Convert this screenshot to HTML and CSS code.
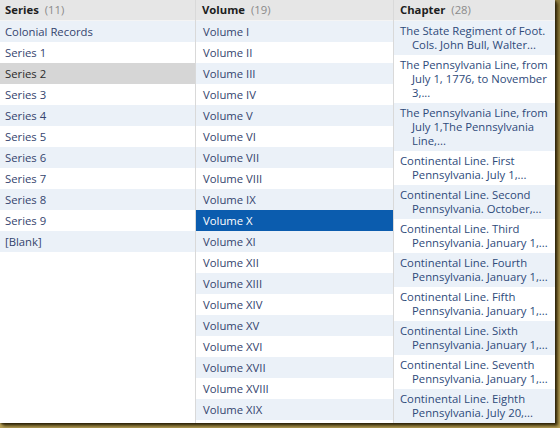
FILE: index.html
```html
<!DOCTYPE html>
<html>
<head>
<meta charset="utf-8">
<link rel="stylesheet" href="styles.css">
</head>
<body>
<div class="frame">
  <div class="browser">
    <div class="col col-series">
      <div class="head"><b>Series</b><span class="count">(11)</span></div>
      <ul class="list">
        <li>Colonial Records</li>
        <li>Series 1</li>
        <li class="sel-gray">Series 2</li>
        <li>Series 3</li>
        <li>Series 4</li>
        <li>Series 5</li>
        <li>Series 6</li>
        <li>Series 7</li>
        <li>Series 8</li>
        <li>Series 9</li>
        <li>[Blank]</li>
      </ul>
    </div>
    <div class="col col-volume">
      <div class="head"><b>Volume</b><span class="count">(19)</span></div>
      <ul class="list">
        <li>Volume I</li>
        <li>Volume II</li>
        <li>Volume III</li>
        <li>Volume IV</li>
        <li>Volume V</li>
        <li>Volume VI</li>
        <li>Volume VII</li>
        <li>Volume VIII</li>
        <li>Volume IX</li>
        <li class="sel-blue">Volume X</li>
        <li>Volume XI</li>
        <li>Volume XII</li>
        <li>Volume XIII</li>
        <li>Volume XIV</li>
        <li>Volume XV</li>
        <li>Volume XVI</li>
        <li>Volume XVII</li>
        <li>Volume XVIII</li>
        <li>Volume XIX</li>
      </ul>
    </div>
    <div class="col col-chapter">
      <div class="head"><b>Chapter</b><span class="count">(28)</span></div>
      <ul class="list chapters">
        <li>The State Regiment of Foot. Cols. John Bull, Walter...</li>
        <li>The Pennsylvania Line, from July 1, 1776, to November 3,...</li>
        <li>The Pennsylvania Line, from July 1,The Pennsylvania Line,...</li>
        <li>Continental Line. First Pennsylvania. July 1,...</li>
        <li>Continental Line. Second Pennsylvania. October,...</li>
        <li>Continental Line. Third Pennsylvania. January 1,...</li>
        <li>Continental Line. Fourth Pennsylvania. January 1,...</li>
        <li>Continental Line. Fifth Pennsylvania. January 1,...</li>
        <li>Continental Line. Sixth Pennsylvania. January 1,...</li>
        <li>Continental Line. Seventh Pennsylvania. January 1,...</li>
        <li>Continental Line. Eighth Pennsylvania. July 20,...</li>
      </ul>
    </div>
  </div>
</div>
</body>
</html>
```
FILE: styles.css
```css
html, body {
  margin: 0;
  padding: 0;
}
body {
  width: 560px;
  height: 428px;
  background: linear-gradient(to bottom, #8c7a3c, #b8a25a);
  overflow: hidden;
  font-family: "Open Sans", "DejaVu Sans", sans-serif;
  font-size: 11.3px;
}
.frame {
  width: 555px;
  height: 423px;
  background: #fff;
  box-shadow: 1px 1px 2px #2a200a, 3px 3px 3px #4a3c12;
  overflow: hidden;
}
.browser {
  display: grid;
  grid-template-columns: 196px 198px 1fr;
  height: 100%;
}
.col {
  display: flex;
  flex-direction: column;
  min-width: 0;
  border-right: 1px solid #d9d9d9;
}
.col-chapter {
  border-right: none;
}
.head {
  height: 20px;
  line-height: 20px;
  background: #e6e6e6;
  border-bottom: 1px solid #f4f4f4;
  padding-left: 5px;
  color: #1e1e1e;
  white-space: nowrap;
}
.col-volume .head,
.col-chapter .head {
  padding-left: 6px;
}
.head b {
  font-weight: 700;
}
.count {
  color: #8a8a8a;
  margin-left: 6px;
}
.list {
  list-style: none;
  margin: 0;
  padding: 0;
}
.list li {
  height: 21px;
  line-height: 21px;
  padding-left: 5px;
  color: #34446e;
  white-space: nowrap;
}
.col-volume .list li {
  padding-left: 7px;
}
.list li:nth-child(odd) {
  background: #ebf1f8;
}
.list li.sel-gray {
  background: #d6d6d6;
  color: #2a2a2a;
}
.list li.sel-blue {
  background: #0b5cae;
  color: #ffffff;
}
.chapters li {
  height: auto;
  line-height: 14px;
  white-space: normal;
  padding: 3px 3px 3px 18px;
  text-indent: -12px;
  color: #2e4a7a;
}
```
